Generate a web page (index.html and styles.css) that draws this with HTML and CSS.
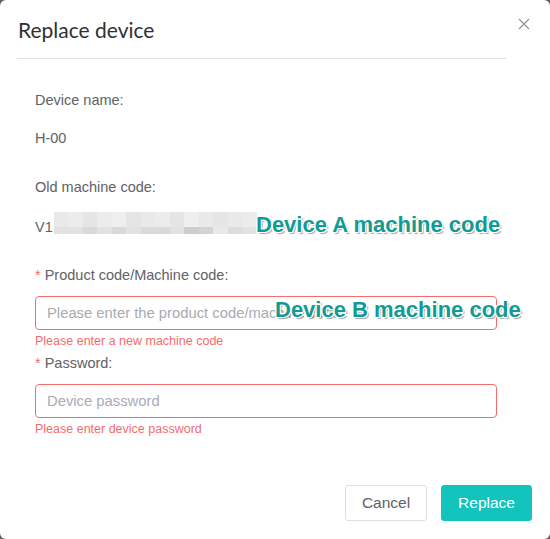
FILE: index.html
```html
<!DOCTYPE html>
<html lang="en">
<head>
<meta charset="utf-8">
<title>Replace device</title>
<link rel="stylesheet" href="styles.css">
</head>
<body>
<div class="dialog">
  <div class="header">
    <h1 class="title">Replace device</h1>
    <button class="close" aria-label="Close">
      <svg width="12" height="12" viewBox="0 0 12 12"><path d="M1 1L11 11M11 1L1 11" stroke="#909399" stroke-width="1.2" fill="none"/></svg>
    </button>
  </div>
  <div class="body">
    <div class="label r1">Device name:</div>
    <div class="value r2">H-00</div>
    <div class="label r3">Old machine code:</div>
    <div class="value r4 code-row">
      <span>V1</span>
      <span class="mosaic">
        <i></i><i></i><i></i><i></i><i></i><i></i><i></i><i></i><i></i><i></i><i></i><i></i><i></i><i></i>
        <i></i><i></i><i></i><i></i><i></i><i></i><i></i><i></i><i></i><i></i><i></i><i></i><i></i><i></i>
      </span>
      <span class="note note-a">Device A machine code</span>
    </div>
    <div class="label r5"><span class="req">*</span> Product code/Machine code:</div>
    <div class="field">
      <div class="input"><span class="ph">Please enter the product code/machine code</span></div>
      <span class="note note-b">Device B machine code</span>
    </div>
    <div class="error">Please enter a new machine code</div>
    <div class="label r6"><span class="req">*</span> Password:</div>
    <div class="field">
      <div class="input"><span class="ph">Device password</span></div>
    </div>
    <div class="error">Please enter device password</div>
  </div>
  <div class="footer">
    <button class="btn cancel">Cancel</button>
    <button class="btn primary">Replace</button>
  </div>
</div>
</body>
</html>
```
FILE: styles.css
```css
* { box-sizing: border-box; }
html, body { margin: 0; padding: 0; }
body {
  background: #5f5f5f;
  width: 550px;
  height: 539px;
  overflow: hidden;
  font-family: "Liberation Sans", Arial, sans-serif;
}
.dialog {
  width: 550px;
  height: 539px;
  background: #fff;
  border-radius: 6px;
  display: flex;
  flex-direction: column;
}
.header {
  position: relative;
  margin: 0 44px 0 17px;
  height: 59px;
  border-bottom: 1px solid #dcdfe6;
}
.title {
  margin: 0;
  padding: 16px 0 0 1px;
  font-family: Lato, "Open Sans", sans-serif;
  font-weight: 400;
  font-size: 21px;
  line-height: 28px;
  color: #303133;
}
.close {
  position: absolute;
  right: -25px;
  top: 17px;
  width: 14px;
  height: 14px;
  padding: 0;
  border: 0;
  background: none;
  display: flex;
  align-items: center;
  justify-content: center;
}
.body {
  padding: 0 53px 0 35px;
}
.label, .value {
  font-size: 14.5px;
  line-height: 20px;
  color: #606266;
}
.r1 { margin-top: 31px; }
.r2 { margin-top: 18px; }
.r3 { margin-top: 29px; }
.r4 { margin-top: 20px; }
.r5 { margin-top: 28px; }
.r6 { margin-top: 4px; }
.req { color: #f56c6c; }
.code-row {
  position: relative;
  display: flex;
  align-items: flex-start;
  height: 20px;
}
.mosaic {
  display: grid;
  grid-template-columns: repeat(14, 14.5px);
  grid-template-rows: 15px 7px;
  margin-left: 1px;
  margin-top: -5px;
}
.mosaic i { display: block; background: #e9e9e9; }
.mosaic i:nth-child(2n) { background: #ececec; }
.mosaic i:nth-child(3n) { background: #e5e5e5; }
.mosaic i:nth-child(5n) { background: #efefef; }
.mosaic i:nth-child(n+15) { background: #e2e2e2; }
.mosaic i:nth-child(17), .mosaic i:nth-child(19) { background: #d9d9d9; }
.mosaic i:nth-child(21), .mosaic i:nth-child(22) { background: #dadada; }
.mosaic i:nth-child(24) { background: #cdcdcd; }
.mosaic i:nth-child(25) { background: #d3d3d3; }
.mosaic i:nth-child(26) { background: #e8e8e8; }
.mosaic i:nth-child(27) { background: #dcdcdc; }
.note {
  position: absolute;
  font-family: "Liberation Sans", Arial, sans-serif;
  font-weight: 700;
  font-size: 22px;
  line-height: 24px;
  color: #119b95;
  white-space: nowrap;
  text-shadow:
    -1px -1px 0 #fff, 1px -1px 0 #fff, -1px 1px 0 #fff, 1px 1px 0 #fff,
    0 -1px 0 #fff, 0 1px 0 #fff, -1px 0 0 #fff, 1px 0 0 #fff,
    2px 2px 1px rgba(0,0,0,0.35);
}
.note-a { left: 221px; top: -4px; }
.field {
  position: relative;
  margin-top: 11px;
  width: 462px;
}
.input {
  height: 34px;
  border: 1px solid #f56c6c;
  border-radius: 4px;
  padding: 0 11px;
  font-size: 14.8px;
  line-height: 32px;
  color: #a8abb2;
  white-space: nowrap;
  overflow: hidden;
}
.note-b { left: 240px; top: 2px; }
.error {
  margin-top: 3px;
  font-size: 12.5px;
  line-height: 16px;
  color: #f56c6c;
}
.footer {
  margin-top: auto;
  display: flex;
  justify-content: flex-end;
  gap: 14px;
  padding: 0 18px 18px 0;
}
.btn {
  height: 36px;
  border-radius: 3px;
  font-family: "Liberation Sans", Arial, sans-serif;
  font-size: 15.5px;
  padding: 0;
  cursor: pointer;
}
.cancel {
  width: 82px;
  background: #fff;
  border: 1px solid #dcdfe6;
  color: #606266;
}
.primary {
  width: 91px;
  background: #13c4bc;
  border: 1px solid #13c4bc;
  color: #fff;
}
```
